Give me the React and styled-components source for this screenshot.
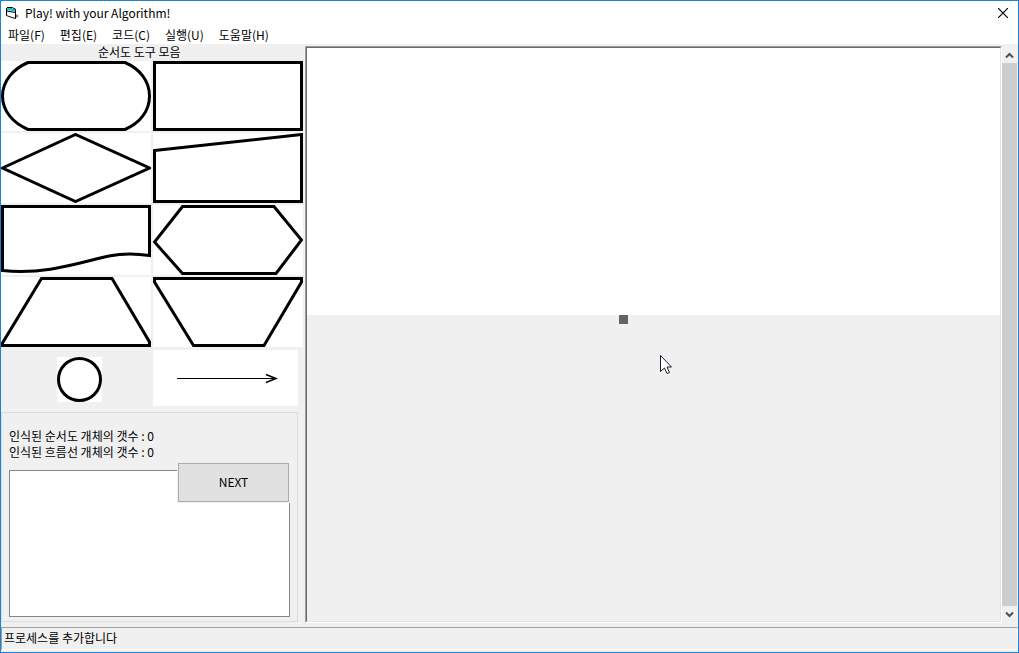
import React from "react";
import styled, { createGlobalStyle } from "styled-components";

const Global = createGlobalStyle`
  * { box-sizing: border-box; }
  html, body, #root { height: 100%; }
  body {
    margin: 0;
    background: #fff;
    color: #000;
    font-family: "Noto Sans CJK KR", "Noto Sans", sans-serif;
    font-size: 12px;
    line-height: 16px;
  }
`;

const Window = styled.div`
  display: flex;
  flex-direction: column;
  min-height: 100vh;
  border: 1px solid #1883d7;
  background: #fff;
`;

const TitleBar = styled.header`
  display: flex;
  align-items: center;
  height: 24px;
  padding: 0 10px 0 5px;
`;

const Title = styled.h1`
  flex: 1;
  margin: 0 0 0 5px;
  font-size: 12px;
  font-weight: 400;
`;

const CloseButton = styled.button`
  display: flex;
  padding: 0;
  border: 0;
  background: none;
`;

const MenuBar = styled.nav`
  display: flex;
  align-items: center;
  gap: 15px;
  height: 19px;
  padding: 0 7px;
`;

const MenuButton = styled.button`
  padding: 0;
  border: 0;
  background: none;
  color: inherit;
  font: inherit;
  white-space: nowrap;
`;

const Workspace = styled.main`
  display: flex;
  flex: 1;
  gap: 2px;
  padding-bottom: 4px;
  background: #f0f0f0;
`;

const Sidebar = styled.aside`
  display: flex;
  flex-direction: column;
  flex: none;
  width: 302px;
  padding-bottom: 1px;
`;

const ToolHeading = styled.h2`
  margin: 0;
  padding: 0 0 1px 97px;
  font-size: 12px;
  font-weight: 400;
`;

const ToolGrid = styled.div`
  display: grid;
  grid-template-columns: repeat(2, 150px);
  gap: 2px;
`;

const LineRow = styled.div`
  display: flex;
  justify-content: space-between;
  align-items: flex-start;
  padding: 3px 5px 6px 56px;
`;

const Tool = styled.button`
  display: block;
  width: ${(p) => p.$w}px;
  height: ${(p) => p.$h}px;
  margin: ${(p) => p.$top || 0}px 0 0;
  padding: 0;
  border: 0;
  background: #fff;
  svg { display: block; }
`;

const StatusGroup = styled.section`
  position: relative;
  display: flex;
  flex-direction: column;
  flex: 1;
  margin-right: 5px;
  padding: 15px 7px 4px;
  border: 1px solid #dcdcdc;
`;

const Count = styled.p`
  margin: 0;
`;

const Output = styled.textarea`
  flex: 1;
  width: 100%;
  min-height: 60px;
  margin: 10px 0 0;
  padding: 4px;
  border: 1px solid #828790;
  border-radius: 0;
  background: #fff;
  font: inherit;
  resize: none;
  outline: 0;
`;

const NextButton = styled.button`
  position: absolute;
  top: 50px;
  right: 8px;
  width: 111px;
  height: 39px;
  padding: 0 0 2px;
  border: 1px solid #adadad;
  background: #e1e1e1;
  box-shadow: 0 0 0 1px #f0f0f0;
  color: #000;
  font: inherit;
`;

const Board = styled.section`
  display: flex;
  flex: 1;
  min-width: 0;
  margin-top: 2px;
  padding-right: 1px;
`;

const Frame = styled.div`
  flex: 1;
  display: flex;
  border: 1px solid;
  border-color: #a0a0a0 #fff #fff #a0a0a0;
`;

const Canvas = styled.div`
  position: relative;
  flex: 1;
  overflow: hidden;
  border: 1px solid;
  border-color: #696969 #e3e3e3 #e3e3e3 #696969;
`;

const Page = styled.div`
  height: 267px;
  background: #fff;
`;

const Handle = styled.div`
  position: absolute;
  top: 267px;
  left: 312px;
  width: 9px;
  height: 9px;
  background: #646464;
`;

const Pointer = styled.svg`
  position: absolute;
  top: 307px;
  left: 353px;
`;

const ScrollBar = styled.div`
  display: flex;
  flex-direction: column;
  width: 15px;
  margin: 1px 0;
`;

const ScrollButton = styled.button`
  display: flex;
  align-items: center;
  justify-content: center;
  height: 16px;
  padding: 0;
  border: 0;
  background: #f0f0f0;
`;

const Thumb = styled.div`
  flex: 1;
  background: #cdcdcd;
`;

const StatusBar = styled.footer`
  height: 25px;
  padding-bottom: 2px;
  background: #f0f0f0;
`;

const StatusText = styled.div`
  height: 23px;
  padding: 2px;
  border: 1px solid;
  border-color: #a0a0a0 #fff #fff #a0a0a0;
`;

const SHAPES = [
  { name: "단말", d: "M27 1.5H124C139 8 148.500 20 148.500 35S139 62 124 68.500H27C12 62 1.500 50 1.500 35S12 8 27 1.500Z" },
  { name: "처리", d: "M1.500 1.500H148.500V68.500H1.500Z" },
  { name: "판단", d: "M1.500 35L74.500 1.500L148.500 35L74.500 68.500Z" },
  { name: "수동 입력", d: "M1.500 17.500L148.500 1.500V68.500H1.500Z" },
  { name: "문서", d: "M1.500 1.500H148.500V50.500C136 48.500 120 48.500 108 51C80 57 46 70 1.500 65.500Z" },
  { name: "준비", d: "M29.500 1.500H121L148.500 35L123 68.500H29.500L1.500 37Z" },
  { name: "수동 조작", d: "M40.500 1.500H111L148.500 65V68.500H1.500V66Z" },
  { name: "병합", d: "M1.500 1.500H148.500V5L111 68.500H40.500L1.500 5Z" },
];

const MENUS = ["파일(F)", "편집(E)", "코드(C)", "실행(U)", "도움말(H)"];

function FormIcon() {
  return (
    <svg width="14" height="12" viewBox="0 0 14 12" aria-hidden="true">
      <path d="M10 7L13 9L10 11Z" fill="#808080" />
      <path d="M0.500 1.500H4L9.500 3.500V11.500L6 10.500L0.500 8.500Z" fill="#fff" stroke="#000" />
      <path d="M1 1H4L10 3V5L4 3.500H1Z" fill="#00d0d8" />
      <path d="M0.500 1V4L9.500 5.500V3" fill="none" stroke="#000" />
      <path d="M1 0.500H6L10 2.500" fill="none" stroke="#000" />
    </svg>
  );
}

export default function App() {
  return (
    <>
      <Global />
      <Window>
        <TitleBar>
          <FormIcon />
          <Title>Play! with your Algorithm!</Title>
          <CloseButton aria-label="닫기">
            <svg width="10" height="10" viewBox="0 0 10 10">
              <path d="M0 0L10 10M10 0L0 10" stroke="#000" strokeWidth="1.2" />
            </svg>
          </CloseButton>
        </TitleBar>
        <MenuBar>
          {MENUS.map((m) => (
            <MenuButton key={m}>{m}</MenuButton>
          ))}
        </MenuBar>
        <Workspace>
          <Sidebar>
            <ToolHeading>순서도 도구 모음</ToolHeading>
            <ToolGrid>
              {SHAPES.map((s) => (
                <Tool key={s.name} $w={150} $h={70} aria-label={s.name}>
                  <svg width="150" height="70" viewBox="0 0 150 70">
                    <path d={s.d} fill="none" stroke="#000" strokeWidth="3" />
                  </svg>
                </Tool>
              ))}
            </ToolGrid>
            <LineRow>
              <Tool $w={45} $h={45} $top={7} aria-label="연결자">
                <svg width="45" height="45" viewBox="0 0 45 45">
                  <circle cx="22.500" cy="22.500" r="21" fill="none" stroke="#000" strokeWidth="3" />
                </svg>
              </Tool>
              <Tool $w={145} $h={56} aria-label="흐름선">
                <svg width="145" height="56" viewBox="0 0 145 56">
                  <path d="M24 28.500H124" stroke="#000" />
                  <path d="M113 24.500L123 28.500L113 32.500" fill="none" stroke="#000" strokeWidth="1.500" />
                </svg>
              </Tool>
            </LineRow>
            <StatusGroup>
              <Count>인식된 순서도 개체의 갯수 : 0</Count>
              <Count>인식된 흐름선 개체의 갯수 : 0</Count>
              <Output aria-label="출력" />
              <NextButton>NEXT</NextButton>
            </StatusGroup>
          </Sidebar>
          <Board>
            <Frame>
              <Canvas>
                <Page />
                <Handle />
                <Pointer width="13" height="20" viewBox="0 0 13 20" aria-hidden="true">
                  <path d="M0.500 0.500V16.500L4.500 13L7 18.500L9.500 17.500L7 12H11.500Z" fill="#fff" stroke="#1a1a2a" />
                </Pointer>
              </Canvas>
            </Frame>
            <ScrollBar>
              <ScrollButton aria-label="위로">
                <svg width="9" height="7" viewBox="0 0 9 7">
                  <path d="M1 5.500L4.500 2L8 5.500" fill="none" stroke="#505050" strokeWidth="2" />
                </svg>
              </ScrollButton>
              <Thumb />
              <ScrollButton aria-label="아래로">
                <svg width="9" height="7" viewBox="0 0 9 7">
                  <path d="M1 1.500L4.500 5L8 1.500" fill="none" stroke="#505050" strokeWidth="2" />
                </svg>
              </ScrollButton>
            </ScrollBar>
          </Board>
        </Workspace>
        <StatusBar>
          <StatusText>프로세스를 추가합니다</StatusText>
        </StatusBar>
      </Window>
    </>
  );
}
